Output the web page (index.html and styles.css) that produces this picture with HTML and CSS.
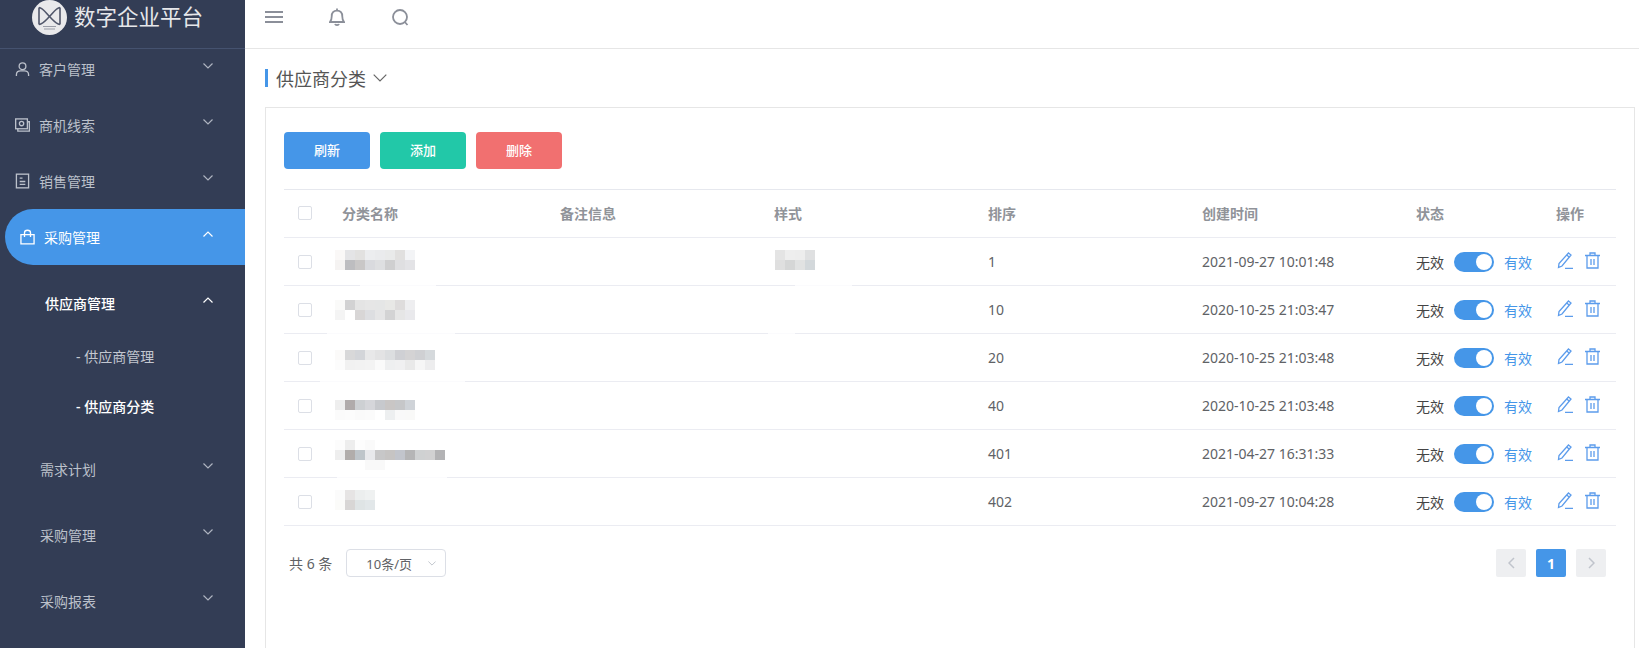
FILE: index.html
```html
<!DOCTYPE html>
<html lang="zh-CN">
<head>
<meta charset="utf-8">
<title>供应商分类</title>
<link rel="stylesheet" href="styles.css">
</head>
<body>
<div class="app">
  <aside class="sidebar">
    <div class="brand">
      <svg class="logo" viewBox="0 0 35 35" width="35" height="35">
        <circle cx="17.5" cy="17.5" r="17.5" fill="#e9e9eb"/>
        <path d="M7 7.5V24.5M28 7.5V24.5M7 7.5C11 8 14 13 17.5 16.5C21 13 24 8 28 7.5M7 24.5C11 24 14 20 17.5 16.5C21 20 24 24 28 24.5" fill="none" stroke="#50566a" stroke-width="1.6"/>
        <path d="M11 26.5H24M12 29H23" stroke="#9a9da8" stroke-width="1.2"/>
      </svg>
      <span class="brand-name">数字企业平台</span>
    </div>
    <nav class="nav">
      <a class="item">
        <svg class="icon" viewBox="0 0 16 16"><circle cx="8" cy="5" r="3.6"/><path d="M1.5 15.5V14C1.5 11.5 3.5 10 6 10H10C12.5 10 14.5 11.5 14.5 14V15.5"/></svg>
        <span class="label">客户管理</span>
        <svg class="chev" viewBox="0 0 10 6"><path d="M.5.5 5 5 9.500 .5"/></svg>
      </a>
      <a class="item">
        <svg class="icon" viewBox="0 0 16 16"><rect x=".7" y="1.500" width="12.500" height="10.500"/><circle cx="7" cy="6.500" r="2.300"/><path d="M13.200 4.500H15.300V14.500H3V12"/></svg>
        <span class="label">商机线索</span>
        <svg class="chev" viewBox="0 0 10 6"><path d="M.5.5 5 5 9.500 .5"/></svg>
      </a>
      <a class="item">
        <svg class="icon" viewBox="0 0 16 16"><rect x="1.500" y=".7" width="13" height="14.600"/><path d="M5 5H8M5 8.500H11M5 11.500H11"/></svg>
        <span class="label">销售管理</span>
        <svg class="chev" viewBox="0 0 10 6"><path d="M.5.5 5 5 9.500 .5"/></svg>
      </a>
      <a class="item item-active">
        <svg class="icon" viewBox="0 0 16 16"><path d="M1 5.500H15V15.300H1ZM4.800 8V3.500C4.800 1.800 6 .8 8 .8C10 .8 11.200 1.800 11.200 3.500V8"/></svg>
        <span class="label">采购管理</span>
        <svg class="chev" viewBox="0 0 10 6"><path d="M.5 5.500 5 1 9.500 5.500"/></svg>
      </a>
      <a class="sub">
        <span class="label">供应商管理</span>
        <svg class="chev" viewBox="0 0 10 6"><path d="M.5 5.500 5 1 9.500 5.500"/></svg>
      </a>
      <a class="leaf">- 供应商管理</a>
      <a class="leaf leaf-active">- 供应商分类</a>
      <div class="group">
        <a class="plain"><span class="label">需求计划</span><svg class="chev" viewBox="0 0 10 6"><path d="M.5.5 5 5 9.500 .5"/></svg></a>
        <a class="plain"><span class="label">采购管理</span><svg class="chev" viewBox="0 0 10 6"><path d="M.5.5 5 5 9.500 .5"/></svg></a>
        <a class="plain"><span class="label">采购报表</span><svg class="chev" viewBox="0 0 10 6"><path d="M.5.5 5 5 9.500 .5"/></svg></a>
      </div>
    </nav>
  </aside>
  <main class="main">
    <header class="topbar">
      <svg class="top-icon menu-icon" viewBox="0 0 18 12"><path d="M0 1H18M0 6H18M0 11H18"/></svg>
      <svg class="top-icon bell-icon" viewBox="0 0 16 18"><path d="M1 14C2.500 12.500 2.700 11 2.700 8.500C2.700 5 4.500 2.700 8 2.700C11.500 2.700 13.300 5 13.300 8.500C13.300 11 13.500 12.500 15 14ZM8 .5V2.700M6 16C6.500 17.400 9.500 17.400 10 16"/></svg>
      <svg class="top-icon search-icon" viewBox="0 0 17 17"><circle cx="8" cy="8" r="7"/><path d="M12.800 13 15.500 16"/></svg>
    </header>
    <div class="title-row">
      <h1 class="title">供应商分类</h1>
      <svg class="title-chev" viewBox="0 0 14 8"><path d="M.7.7 7 7 13.300 .7"/></svg>
    </div>
    <section class="card">
      <div class="toolbar">
        <button class="btn btn-blue">刷新</button>
        <button class="btn btn-teal">添加</button>
        <button class="btn btn-red">删除</button>
      </div>
      <table class="grid">
        <colgroup>
          <col class="c-check"><col class="c-name"><col class="c-std"><col class="c-std"><col class="c-std"><col class="c-std"><col class="c-status"><col class="c-act">
        </colgroup>
        <thead>
          <tr>
            <th><span class="check"></span></th><th>分类名称</th><th>备注信息</th><th>样式</th><th>排序</th><th>创建时间</th><th>状态</th><th>操作</th>
          </tr>
        </thead>
        <tbody>
          <tr>
            <td><span class="check"></span></td>
            <td class="blur-cell top12">
              <svg class="mosaic" width="80" height="20" shape-rendering="crispEdges">
                <rect x="0" width="10" height="10" fill="#faf8f7"/><rect x="10" width="10" height="10" fill="#e4e4e6"/><rect x="20" width="10" height="10" fill="#e2e1e0"/><rect x="30" width="10" height="10" fill="#ecedef"/><rect x="40" width="10" height="10" fill="#eaebed"/><rect x="50" width="10" height="10" fill="#e9eaea"/><rect x="60" width="10" height="10" fill="#e1e0df"/><rect x="70" width="10" height="10" fill="#f3f4f6"/>
                <rect x="0" y="10" width="10" height="10" fill="#f5f3f2"/><rect x="10" y="10" width="10" height="10" fill="#bdbdc0"/><rect x="20" y="10" width="10" height="10" fill="#c9c7c7"/><rect x="30" y="10" width="10" height="10" fill="#d9dade"/><rect x="40" y="10" width="10" height="10" fill="#dedfe1"/><rect x="50" y="10" width="10" height="10" fill="#cfcfd0"/><rect x="60" y="10" width="10" height="10" fill="#dfdfe1"/><rect x="70" y="10" width="10" height="10" fill="#e3e3e6"/>
              </svg>
              <span class="smudge s-a"></span>
            </td>
            <td></td>
            <td class="blur-cell top12">
              <svg class="mosaic mosaic-style" width="40" height="20" shape-rendering="crispEdges">
                <rect x="0" width="10" height="10" fill="#e4e4e4"/><rect x="10" width="10" height="10" fill="#eeeeee"/><rect x="20" width="10" height="10" fill="#ededed"/><rect x="30" width="10" height="10" fill="#dfe0e1"/>
                <rect x="0" y="10" width="10" height="10" fill="#dfdfdf"/><rect x="10" y="10" width="10" height="10" fill="#d5d6d6"/><rect x="20" y="10" width="10" height="10" fill="#e1e2e2"/><rect x="30" y="10" width="10" height="10" fill="#d3d8db"/>
              </svg>
              <span class="smudge s-g"></span>
            </td>
            <td>1</td><td>2021-09-27 10:01:48</td>
            <td><div class="status"><span class="off">无效</span><span class="switch"><span class="knob"></span></span><span class="on">有效</span></div></td>
            <td><div class="actions">
              <svg class="act" viewBox="0 0 16 17"><path d="M11.500 1 14 3 5 14 1.500 15.500 2 11.500ZM9.800 3 12.300 5.200M8 16.300H16"/></svg>
              <svg class="act" viewBox="0 0 16 17"><path d="M0 3.500H15M5 3.500V1H10V3.500M2 3.500V16H13V3.500M6 7V13M9 7V13"/></svg>
            </div></td>
          </tr>
          <tr>
            <td><span class="check"></span></td>
            <td class="blur-cell top14">
              <svg class="mosaic" width="80" height="20" shape-rendering="crispEdges">
                <rect x="0" width="10" height="10" fill="#fafaf9"/><rect x="10" width="10" height="10" fill="#d2d2d3"/><rect x="20" width="10" height="10" fill="#e4e4e4"/><rect x="30" width="10" height="10" fill="#e6e6e6"/><rect x="40" width="10" height="10" fill="#e5e6e6"/><rect x="50" width="10" height="10" fill="#e8e8e6"/><rect x="60" width="10" height="10" fill="#dedcdc"/><rect x="70" width="10" height="10" fill="#eeeef0"/>
                <rect x="0" y="10" width="10" height="10" fill="#f4f4f4"/><rect x="20" y="10" width="10" height="10" fill="#d8d6d6"/><rect x="30" y="10" width="10" height="10" fill="#dddee1"/><rect x="40" y="10" width="10" height="10" fill="#e5e5e6"/><rect x="50" y="10" width="10" height="10" fill="#d3d3d4"/><rect x="60" y="10" width="10" height="10" fill="#e6e6e6"/><rect x="70" y="10" width="10" height="10" fill="#e9e9ec"/>
              </svg>
              <span class="smudge s-b"></span>
            </td>
            <td></td>
            <td class="blur-cell"><span class="smudge s-h"></span></td>
            <td>10</td><td>2020-10-25 21:03:47</td>
            <td><div class="status"><span class="off">无效</span><span class="switch"><span class="knob"></span></span><span class="on">有效</span></div></td>
            <td><div class="actions">
              <svg class="act" viewBox="0 0 16 17"><path d="M11.500 1 14 3 5 14 1.500 15.500 2 11.500ZM9.800 3 12.300 5.200M8 16.300H16"/></svg>
              <svg class="act" viewBox="0 0 16 17"><path d="M0 3.500H15M5 3.500V1H10V3.500M2 3.500V16H13V3.500M6 7V13M9 7V13"/></svg>
            </div></td>
          </tr>
          <tr>
            <td><span class="check"></span></td>
            <td class="blur-cell top16">
              <svg class="mosaic" width="100" height="20" shape-rendering="crispEdges">
                <rect x="0" width="10" height="10" fill="#fbfaf9"/><rect x="10" width="10" height="10" fill="#d8d8d9"/><rect x="20" width="10" height="10" fill="#d3d5d9"/><rect x="30" width="10" height="10" fill="#e8e8e9"/><rect x="40" width="10" height="10" fill="#e3e3e4"/><rect x="50" width="10" height="10" fill="#dcdee0"/><rect x="60" width="10" height="10" fill="#cfd0d4"/><rect x="70" width="10" height="10" fill="#d4d3d4"/><rect x="80" width="10" height="10" fill="#cfd0d3"/><rect x="90" width="10" height="10" fill="#d5d9dc"/>
                <rect x="0" y="10" width="10" height="10" fill="#fcfcfc"/><rect x="10" y="10" width="10" height="10" fill="#f1f1f1"/><rect x="20" y="10" width="10" height="10" fill="#f2f2f2"/><rect x="30" y="10" width="10" height="10" fill="#f3f3f3"/><rect x="40" y="10" width="10" height="10" fill="#fafafa"/><rect x="50" y="10" width="10" height="10" fill="#eeeff0"/><rect x="60" y="10" width="10" height="10" fill="#f0f0f1"/><rect x="70" y="10" width="10" height="10" fill="#e9e9e9"/><rect x="80" y="10" width="10" height="10" fill="#f6f6f6"/><rect x="90" y="10" width="10" height="10" fill="#ededee"/>
              </svg>
              <span class="smudge s-c"></span>
            </td>
            <td></td><td></td>
            <td>20</td><td>2020-10-25 21:03:48</td>
            <td><div class="status"><span class="off">无效</span><span class="switch"><span class="knob"></span></span><span class="on">有效</span></div></td>
            <td><div class="actions">
              <svg class="act" viewBox="0 0 16 17"><path d="M11.500 1 14 3 5 14 1.500 15.500 2 11.500ZM9.800 3 12.300 5.200M8 16.300H16"/></svg>
              <svg class="act" viewBox="0 0 16 17"><path d="M0 3.500H15M5 3.500V1H10V3.500M2 3.500V16H13V3.500M6 7V13M9 7V13"/></svg>
            </div></td>
          </tr>
          <tr>
            <td><span class="check"></span></td>
            <td class="blur-cell top18">
              <svg class="mosaic" width="80" height="20" shape-rendering="crispEdges">
                <rect x="0" width="10" height="10" fill="#eeeeee"/><rect x="10" width="10" height="10" fill="#b0abab"/><rect x="20" width="10" height="10" fill="#cdd0d3"/><rect x="30" width="10" height="10" fill="#d5d6da"/><rect x="40" width="10" height="10" fill="#c7c9cd"/><rect x="50" width="10" height="10" fill="#c9c6c5"/><rect x="60" width="10" height="10" fill="#c6c7c9"/><rect x="70" width="10" height="10" fill="#cfd3d8"/>
                <rect x="0" y="10" width="10" height="10" fill="#fbfbfb"/><rect x="10" y="10" width="10" height="10" fill="#fcfcfc"/><rect x="20" y="10" width="10" height="10" fill="#fafafa"/><rect x="30" y="10" width="10" height="10" fill="#fbfbfb"/><rect x="50" y="10" width="10" height="10" fill="#edeff0"/><rect x="60" y="10" width="10" height="10" fill="#f9f9f9"/><rect x="70" y="10" width="10" height="10" fill="#f9f9f8"/>
              </svg>
            </td>
            <td></td><td></td>
            <td>40</td><td>2020-10-25 21:03:48</td>
            <td><div class="status"><span class="off">无效</span><span class="switch"><span class="knob"></span></span><span class="on">有效</span></div></td>
            <td><div class="actions">
              <svg class="act" viewBox="0 0 16 17"><path d="M11.500 1 14 3 5 14 1.500 15.500 2 11.500ZM9.800 3 12.300 5.200M8 16.300H16"/></svg>
              <svg class="act" viewBox="0 0 16 17"><path d="M0 3.500H15M5 3.500V1H10V3.500M2 3.500V16H13V3.500M6 7V13M9 7V13"/></svg>
            </div></td>
          </tr>
          <tr>
            <td><span class="check"></span></td>
            <td class="blur-cell top10">
              <svg class="mosaic" width="110" height="30" shape-rendering="crispEdges">
                <rect x="0" width="10" height="10" fill="#fcfcfc"/><rect x="10" width="10" height="10" fill="#ededed"/><rect x="20" width="10" height="10" fill="#fdfdfd"/><rect x="30" width="10" height="10" fill="#fafafa"/>
                <rect x="0" y="10" width="10" height="10" fill="#eeeeee"/><rect x="10" y="10" width="10" height="10" fill="#b1adab"/><rect x="20" y="10" width="10" height="10" fill="#bec5ca"/><rect x="30" y="10" width="10" height="10" fill="#e8e9ec"/><rect x="40" y="10" width="10" height="10" fill="#c7c7c8"/><rect x="50" y="10" width="10" height="10" fill="#c6c4c3"/><rect x="60" y="10" width="10" height="10" fill="#c2c5cc"/><rect x="70" y="10" width="10" height="10" fill="#b5b5b6"/><rect x="80" y="10" width="10" height="10" fill="#cfd1d2"/><rect x="90" y="10" width="10" height="10" fill="#d1d1d2"/><rect x="100" y="10" width="10" height="10" fill="#b3b3b5"/>
                <rect x="30" y="20" width="20" height="10" fill="#f9f9f9"/>
              </svg>
              <span class="smudge s-e"></span>
            </td>
            <td></td><td></td>
            <td>401</td><td>2021-04-27 16:31:33</td>
            <td><div class="status"><span class="off">无效</span><span class="switch"><span class="knob"></span></span><span class="on">有效</span></div></td>
            <td><div class="actions">
              <svg class="act" viewBox="0 0 16 17"><path d="M11.500 1 14 3 5 14 1.500 15.500 2 11.500ZM9.800 3 12.300 5.200M8 16.300H16"/></svg>
              <svg class="act" viewBox="0 0 16 17"><path d="M0 3.500H15M5 3.500V1H10V3.500M2 3.500V16H13V3.500M6 7V13M9 7V13"/></svg>
            </div></td>
          </tr>
          <tr>
            <td><span class="check"></span></td>
            <td class="blur-cell top12">
              <svg class="mosaic" width="40" height="20" shape-rendering="crispEdges">
                <rect x="0" width="10" height="10" fill="#fbfbfb"/><rect x="10" width="10" height="10" fill="#e6e4e4"/><rect x="20" width="10" height="10" fill="#eceeee"/><rect x="30" width="10" height="10" fill="#eff1f1"/>
                <rect x="0" y="10" width="10" height="10" fill="#fbfbf9"/><rect x="10" y="10" width="10" height="10" fill="#d8d6d5"/><rect x="20" y="10" width="10" height="10" fill="#dfe4e5"/><rect x="30" y="10" width="10" height="10" fill="#e2e7e9"/>
              </svg>
            </td>
            <td></td><td></td>
            <td>402</td><td>2021-09-27 10:04:28</td>
            <td><div class="status"><span class="off">无效</span><span class="switch"><span class="knob"></span></span><span class="on">有效</span></div></td>
            <td><div class="actions">
              <svg class="act" viewBox="0 0 16 17"><path d="M11.500 1 14 3 5 14 1.500 15.500 2 11.500ZM9.800 3 12.300 5.200M8 16.300H16"/></svg>
              <svg class="act" viewBox="0 0 16 17"><path d="M0 3.500H15M5 3.500V1H10V3.500M2 3.500V16H13V3.500M6 7V13M9 7V13"/></svg>
            </div></td>
          </tr>
        </tbody>
      </table>
      <div class="pagination">
        <span class="total">共 6 条</span>
        <div class="select"><span>10条/页</span><svg class="select-chev" viewBox="0 0 10 6"><path d="M.5.5 5 5 9.500 .5"/></svg></div>
        <div class="pager">
          <span class="page"><svg class="page-arrow" viewBox="0 0 7 12"><path d="M6 1 1 6 6 11"/></svg></span>
          <span class="page page-current">1</span>
          <span class="page"><svg class="page-arrow" viewBox="0 0 7 12"><path d="M1 1 6 6 1 11"/></svg></span>
        </div>
      </div>
    </section>
  </main>
</div>
</body>
</html>
```
FILE: styles.css
```css
* { box-sizing: border-box; }
html, body { margin: 0; height: 100%; overflow: hidden; }
body { font-family: "Noto Sans", "Noto Sans CJK SC", sans-serif; font-size: 14px; color: #606266; background: #fff; }
svg { display: block; flex: none; }

.app { display: flex; height: 648px; overflow: hidden; }

.sidebar { width: 245px; flex: none; background: #333d55; color: #bcc1cb; overflow: hidden; }
.brand { height: 49px; display: flex; align-items: flex-start; padding-left: 32px; gap: 7px; border-bottom: 1px solid #45526f; }
.brand-name { font-size: 21.5px; line-height: 33px; color: #e6e7ea; white-space: nowrap; }
.nav { display: flex; flex-direction: column; margin-top: -8px; }

.icon { width: 15px; height: 16px; fill: none; stroke: #bcc1cb; stroke-width: 1.400; }
.chev { width: 10px; height: 6px; fill: none; stroke: #aeb4c0; stroke-width: 1.200; margin-left: auto; margin-top: -6px; }
.item, .sub, .plain { display: flex; align-items: center; padding-right: 32px; }
.item { height: 56px; padding-left: 15px; gap: 9px; }
.item-active { margin-left: 5px; padding-left: 15px; gap: 9px; background: #4596e8; color: #fff; border-radius: 28px 0 0 28px; }
.item-active .icon { stroke: #fff; }
.item-active .chev, .sub .chev { stroke: #fff; }
.sub { height: 66px; padding-top: 10px; padding-left: 45px; color: #fff; font-weight: 500; }
.leaf { height: 50px; display: flex; align-items: center; padding-left: 76px; color: #c3c7d0; }
.leaf-active { color: #fff; font-weight: 500; }
.group { margin-top: 5px; }
.plain { height: 66px; padding-left: 40px; }

.main { flex: 1; min-width: 0; padding-right: 4px; display: flex; flex-direction: column; }
.topbar { height: 49px; margin-right: -4px; flex: none; display: flex; align-items: flex-start; padding-left: 20px; border-bottom: 1px solid #e6e6e6; }
.top-icon { fill: none; stroke: #8b8f99; stroke-width: 1.800; }
.menu-icon { width: 18px; height: 12px; margin-top: 11px; }
.bell-icon { width: 16px; height: 18px; margin-top: 8px; margin-left: 46px; }
.search-icon { width: 17px; height: 17px; margin-top: 9px; margin-left: 47px; }

.title-row { height: 58px; flex: none; margin-left: 20px; display: flex; align-items: center; gap: 7px; }
.title { margin: 0; height: 18px; padding: 2px 0 0 8px; font-size: 18px; font-weight: 400; line-height: 16px; color: #555; border-left: 3px solid #4596e8; }
.title-chev { width: 14px; height: 8px; fill: none; stroke: #666; stroke-width: 1.200; }

.card { margin-left: 20px; height: 600px; flex: none; border: 1px solid #e6e6e6; padding: 24px 18px; }
.toolbar { display: flex; gap: 10px; margin-bottom: 20px; }
.btn { width: 86px; height: 37px; padding: 0 0 3px; border: 0; border-radius: 4px; color: #fff; font: 500 13px "Noto Sans", "Noto Sans CJK SC", sans-serif; }
.btn-blue { background: #4596e8; }
.btn-teal { background: #22c8a8; }
.btn-red { background: #f17070; }

.grid { width: 1332px; table-layout: fixed; border-collapse: separate; border-spacing: 0; }
.c-check { width: 58px; }
.c-name { width: 218px; }
.c-std { width: 214px; }
.c-status { width: 140px; }
.c-act { width: 60px; }
.grid th { height: 49px; padding: 0 0 2px; text-align: left; font-weight: 700; font-size: 14px; color: #909399; border-top: 1px solid #e6e8ee; border-bottom: 1px solid #ebecf2; }
.grid td { height: 48px; padding: 0; border-bottom: 1px solid #ebecf2; font-size: 14px; color: #606266; position: relative; }
.check { display: block; width: 14px; height: 14px; margin-left: 14px; border: 1px solid #dcdfe6; border-radius: 2px; background: #fff; }

.grid td.blur-cell { vertical-align: top; padding: 0; }
.mosaic { margin-left: -7px; }
.mosaic-style { margin-left: 1px; }
.grid td.top10 { padding-top: 10px; }
.grid td.top12 { padding-top: 12px; }
.grid td.top14 { padding-top: 14px; }
.grid td.top16 { padding-top: 16px; }
.grid td.top18 { padding-top: 18px; }
.smudge { position: absolute; bottom: -5px; height: 9px; background: #fff; opacity: .8; border-radius: 4px; }
.s-a { left: 18px; width: 76px; }
.s-b { left: -15px; width: 128px; }
.s-c { left: -22px; width: 145px; }
.s-e { left: -5px; width: 110px; }
.s-g { left: 21px; width: 57px; }
.s-h { left: -6px; width: 27px; }

.status { display: flex; align-items: center; }
.off { color: #444; }
.on { color: #4596e8; }
.switch { width: 40px; height: 20px; margin: 0 10px; border-radius: 10px; background: #4596e8; display: flex; align-items: center; justify-content: flex-end; padding-right: 2px; }
.knob { width: 16px; height: 16px; border-radius: 50%; background: #fff; }
.actions { display: flex; gap: 12px; padding-left: 1px; margin-top: -2px; }
.act { width: 16px; height: 17px; fill: none; stroke: #5c9cec; stroke-width: 1.300; }

.pagination { display: flex; align-items: center; height: 28px; margin-top: 23px; padding: 0 10px 0 5px; }
.total { color: #606266; margin-right: 14px; }
.select { width: 100px; height: 28px; border: 1px solid #dcdfe6; border-radius: 4px; display: flex; align-items: center; padding: 0 9px 0 19px; font-size: 13px; color: #606266; }
.select-chev { width: 8px; height: 5px; margin-left: auto; fill: none; stroke: #c0c4cc; stroke-width: 1.200; }
.pager { margin-left: auto; display: flex; gap: 10px; }
.page { width: 30px; height: 28px; border-radius: 2px; background: #eeeff1; display: flex; align-items: center; justify-content: center; font-weight: 700; }
.page-current { background: #4596e8; color: #fff; }
.page-arrow { width: 7px; height: 12px; fill: none; stroke: #c0c4cc; stroke-width: 1.500; }
```
